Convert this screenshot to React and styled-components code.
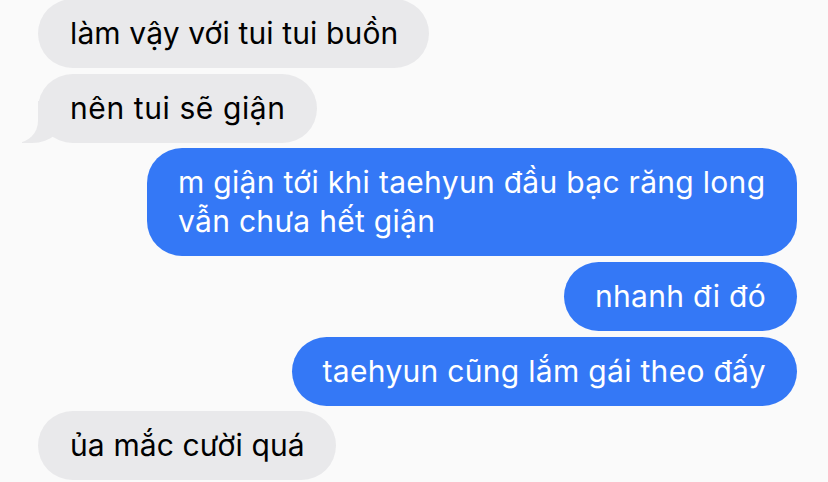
import React from "react";
import styled, { createGlobalStyle, css } from "styled-components";

const GlobalStyle = createGlobalStyle`
  html, body {
    margin: 0;
    padding: 0;
    background: #fafafa;
  }
`;

const Thread = styled.div`
  width: 828px;
  height: 482px;
  overflow: hidden;
  box-sizing: border-box;
  padding: 0 31px 0 38px;
  display: flex;
  flex-direction: column;
  gap: 5.7px;
  background: #fafafa;
  font-family: Inter, "Noto Sans", "Liberation Sans", sans-serif;
`;

const Row = styled.div`
  display: flex;
  justify-content: ${({ $mine }) => ($mine ? "flex-end" : "flex-start")};
  margin-top: ${({ $first }) => ($first ? "-1px" : "0")};
`;

const Bubble = styled.div`
  position: relative;
  box-sizing: border-box;
  max-width: 650px;
  padding: 15px 31px 15px 32px;
  border-radius: 35px;
  font-size: 30px;
  line-height: 39px;
  letter-spacing: ${({ $spacing }) => $spacing ?? 0.12}px;
  background: #e9e9eb;
  color: #000;

  ${({ $mine }) =>
    $mine &&
    css`
      background: #3478f6;
      color: #fff;
      padding: 15px 31px 15px 31px;
    `}

  ${({ $tail }) =>
    $tail &&
    css`
      &::before,
      &::after {
        content: "";
        position: absolute;
        bottom: 0;
      }
      &::before {
        left: -16px;
        width: 44px;
        height: 42px;
        background: #e9e9eb;
        border-bottom-right-radius: 34px 30px;
      }
      &::after {
        left: -56px;
        width: 56px;
        height: 42px;
        background: #fafafa;
        border-bottom-right-radius: 22px;
      }
    `}
`;

// spacing: per-message tracking so line widths line up with the capture
const messages = [
  { text: "làm vậy với tui tui buồn" },
  { text: "nên tui sẽ giận", tail: true, spacing: 0.6 },
  { text: "m giận tới khi taehyun đầu bạc răng long vẫn chưa hết giận", mine: true, spacing: 0.3 },
  { text: "nhanh đi đó", mine: true, spacing: 0.3 },
  { text: "taehyun cũng lắm gái theo đấy", mine: true, spacing: 0.3 },
  { text: "ủa mắc cười quá" },
];

export default function App() {
  return (
    <>
      <GlobalStyle />
      <Thread>
        {messages.map((m, i) => (
          <Row key={i} $mine={m.mine} $first={i === 0}>
            <Bubble $mine={m.mine} $tail={m.tail} $spacing={m.spacing}>
              {m.text}
            </Bubble>
          </Row>
        ))}
      </Thread>
    </>
  );
}
